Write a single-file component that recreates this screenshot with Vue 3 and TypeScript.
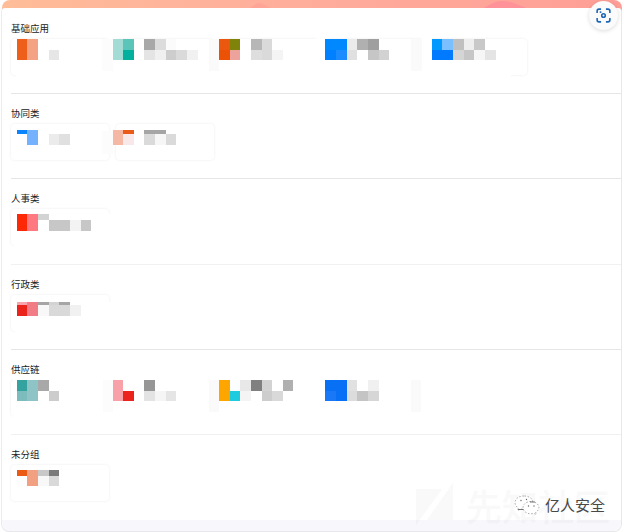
<template>
  <main class="page">
    <header class="banner">
      <svg class="banner-shapes" viewBox="0 0 620 25">
        <path d="M248 8C252 6 253 3 257 3S263 6 269 8Z" fill="#ffa598" />
        <path d="M474 10C487 8 489 1 500 1S519 7 530 10Z" fill="#ff9299" />
      </svg>
    </header>

    <div class="panel">
      <section class="group" v-for="group in groups" :key="group.title">
        <h2 class="group-title">{{ group.title }}</h2>
        <div class="card-row">
          <div class="card" v-for="n in group.cards" :key="n"></div>
        </div>
        <svg class="mosaic" viewBox="0 0 600 85" shape-rendering="crispEdges">
          <rect
            v-for="(cover, i) in group.covers"
            :key="'c' + i"
            :x="cover[0]"
            :y="cover[1]"
            :width="cover[2]"
            :height="cover[3]"
            :fill="cover[4]"
          />
          <rect
            v-for="(tile, i) in group.tiles"
            :key="i"
            :x="tileX(tile[0])"
            :y="group.rows[tile[1]]"
            :width="tileX(tile[0] + 1) - tileX(tile[0])"
            :height="group.rows[tile[1] + 1] - group.rows[tile[1]]"
            :fill="tile[2]"
          />
        </svg>
      </section>
      <footer class="panel-footer"></footer>
    </div>

    <button class="scan-btn" aria-label="scan">
      <svg viewBox="0 0 16 16" fill="none" stroke="#1f66b3" stroke-width="1.7">
        <path d="M1.200 5.400V3.200a2 2 0 0 1 2-2h2.200M10.600 1.200h2.200a2 2 0 0 1 2 2v2.200M14.800 10.600v2.200a2 2 0 0 1-2 2h-2.200M5.400 14.800H3.200a2 2 0 0 1-2-2v-2.200" />
        <circle cx="8" cy="8" r="1.900" />
        <path d="M4 4.400h1.700" />
      </svg>
    </button>

    <div class="watermark">
      <svg class="watermark-logo" viewBox="0 0 38 38">
        <path d="M0 0H26L0 36ZM37-6V31H11Z" fill="#000" />
      </svg>
      <span>先知社区</span>
    </div>

    <div class="account">
      <svg class="wechat" viewBox="0 0 26 20">
        <g fill="#fff" stroke="#999" stroke-width="0.8" stroke-dasharray="1.6 1.6">
          <path d="M10 1C4.500 1 1 4 1 7.500c0 2.300 1.300 4.200 3.400 5.400L3.500 15.500l3.400-1.500 3.100.4c5 0 9-3 9-6.900S15 1 10 1Z" />
          <path d="M17 6.500c-4.600 0-8 2.700-8 6.100s3.400 6.200 8 6.200l2.600-.4 2.800 1-.7-2.200c2-1.100 3.200-2.700 3.200-4.600 0-3.400-3.400-6.100-7.900-6.100Z" />
        </g>
        <path d="M4 14.500h5.500M16 7h5" stroke="#666" stroke-width="0.9" />
        <g fill="#666">
          <circle cx="7" cy="5.500" r="0.7" />
          <circle cx="12.500" cy="4.500" r="0.7" />
          <circle cx="14.500" cy="11" r="0.7" />
          <circle cx="20" cy="11" r="0.7" />
        </g>
      </svg>
      <span class="account-name">亿人安全</span>
    </div>
  </main>
</template>

<script setup lang="ts">
// column, row, colour
type Tile = [number, number, string];
// x, y, width, height, colour
type Cover = [number, number, number, number, string];

interface Group {
  title: string;
  cards: number;
  rows: number[];
  tiles: Tile[];
  covers: Cover[];
}

const tileX = (col: number) => Math.floor(6.3 + col * 10.64);

const groups: Group[] = [
  {
    title: '基础应用',
    cards: 5,
    rows: [31, 42, 52],
    covers: [
      [7, 31, 417, 32, '#fff'],
      [411, 28, 10, 42, '#fff'],
      [91, 31, 11, 32, '#fcfcfc'],
      [198, 31, 10, 32, '#fafafa'],
      [400, 31, 11, 32, '#fafafa'],
      [5, 63, 415, 9, '#fff'],
      [420, 65, 80, 7, '#fff'],
    ],
    tiles: [
      [0, 0, '#ed5f1a'], [1, 0, '#f4a284'],
      [0, 1, '#ed5f1a'], [1, 1, '#f4a284'], [3, 1, '#e6e6e6'],
      [9, 0, '#a3dcd4'], [10, 0, '#5bc5b9'], [12, 0, '#a8a8a8'], [13, 0, '#dcdcdc'], [14, 0, '#fbfbfb'],
      [9, 1, '#a3dcd4'], [10, 1, '#03b09d'], [12, 1, '#e4e4e4'], [13, 1, '#f0f0f0'], [14, 1, '#cdcdcd'], [15, 1, '#dadada'], [16, 1, '#f1f1f1'],
      [19, 0, '#ec5710'], [20, 0, '#80830a'], [22, 0, '#b7b7b7'], [23, 0, '#dadada'],
      [19, 1, '#ec5205'], [20, 1, '#eda29c'], [22, 1, '#dedede'], [23, 1, '#dadada'], [24, 1, '#f4f4f4'],
      [29, 0, '#0088ff'], [30, 0, '#0088ff'], [31, 0, '#ebebeb'], [32, 0, '#b0b0b0'], [33, 0, '#9f9f9f'],
      [29, 1, '#007fff'], [30, 1, '#1a8cff'], [31, 1, '#e0e0e0'], [33, 1, '#c6c6c6'], [34, 1, '#d2d2d2'],
      [39, 0, '#0099ff'], [40, 0, '#7abfff'], [41, 0, '#c0c0c0'], [42, 0, '#eeeeee'], [43, 0, '#c8c8c8'],
      [39, 1, '#007aff'], [40, 1, '#007aff'], [41, 1, '#d5d5d5'], [42, 1, '#c6c6c6'], [43, 1, '#f6f6f6'], [44, 1, '#e4e4e4'],
    ],
  },
  {
    title: '协同类',
    cards: 2,
    rows: [37, 41, 52],
    covers: [[91, 38, 11, 23, '#fcfcfc']],
    tiles: [
      [0, 0, '#0a85ff'], [1, 0, '#74b2fd'],
      [1, 1, '#74b2fd'], [3, 1, '#ebebeb'], [4, 1, '#e0e0e0'],
      [9, 0, '#f5b8a5'], [10, 0, '#ea5a18'], [12, 0, '#a5a5a5'], [13, 0, '#a5a5a5'],
      [9, 1, '#f5b8a5'], [10, 1, '#f9e8ea'], [12, 1, '#dadada'], [13, 1, '#f6f6f6'], [14, 1, '#dadada'],
    ],
  },
  {
    title: '人事类',
    cards: 1,
    rows: [35, 41, 52],
    covers: [[3, 60, 104, 11, '#fff'], [90, 35, 14, 34, '#fff']],
    tiles: [
      [0, 0, '#fd2806'], [1, 0, '#ff7a80'], [2, 0, '#d3d3d3'],
      [0, 1, '#fd2806'], [1, 1, '#ff7a80'], [3, 1, '#c7c7c7'], [4, 1, '#c7c7c7'], [5, 1, '#f3f3f3'], [6, 1, '#c7c7c7'],
    ],
  },
  {
    title: '行政类',
    cards: 1,
    rows: [38, 41, 52],
    covers: [[7, 38, 96, 29, '#fff'], [4, 65, 98, 6, '#fff']],
    tiles: [
      [0, 0, '#f5a5ab'], [1, 0, '#f17c85'], [2, 0, '#a5a5a5'], [3, 0, '#d3d3d3'], [4, 0, '#a5a5a5'],
      [0, 1, '#ea231b'], [1, 1, '#f17c85'], [2, 1, '#f8f8f8'], [3, 1, '#d9d9d9'], [4, 1, '#d9d9d9'], [5, 1, '#f1f1f1'],
    ],
  },
  {
    title: '供应链',
    cards: 4,
    rows: [31, 42, 52],
    covers: [
      [2, 28, 418, 43, '#fff'],
      [92, 31, 10, 32, '#fcfcfc'],
      [198, 31, 10, 32, '#fafafa'],
      [400, 31, 10, 32, '#fafafa'],
    ],
    tiles: [
      [0, 0, '#34a3a0'], [1, 0, '#8fc4c7'], [2, 0, '#a8a8a8'],
      [0, 1, '#7dbcbc'], [1, 1, '#8fc4c7'], [3, 1, '#cccccc'],
      [9, 0, '#f8a1a9'], [12, 0, '#969696'],
      [9, 1, '#f8a1a9'], [10, 1, '#ea241c'], [12, 1, '#e3e3e3'], [13, 1, '#f5f5f5'], [14, 1, '#e5e5e5'],
      [19, 0, '#ffa500'], [20, 0, '#fbfdff'], [21, 0, '#e8e8e8'], [22, 0, '#808080'], [23, 0, '#d3d3d3'], [25, 0, '#b0b0b0'],
      [19, 1, '#ffa500'], [20, 1, '#1fccdf'], [21, 1, '#f4f4f4'], [23, 1, '#cdcdcd'], [24, 1, '#d9d9d9'],
      [29, 0, '#0870f5'], [30, 0, '#0870f5'], [31, 0, '#e1e1e1'], [33, 0, '#f0f0f0'],
      [29, 1, '#1a78f7'], [30, 1, '#0870f5'], [31, 1, '#dcdcdc'], [32, 1, '#c4c4c4'], [33, 1, '#d6d6d6'],
    ],
  },
  {
    title: '未分组',
    cards: 1,
    rows: [36, 42, 52],
    covers: [],
    tiles: [
      [0, 0, '#ea5a14'], [1, 0, '#f2a082'], [2, 0, '#c8c8c8'], [3, 0, '#7a7a7a'],
      [0, 1, '#fdfdfd'], [1, 1, '#f2a082'], [2, 1, '#f8f8f8'], [3, 1, '#d9d9d9'],
    ],
  },
];
</script>

<style>
body {
  background: #fff;
}
</style>

<style scoped>
.page {
  position: relative;
  width: 624px;
  height: 532px;
  box-sizing: border-box;
  padding: 0 2px;
  overflow: hidden;
  font-family: "Noto Sans", "Noto Sans CJK SC", sans-serif;
}

.banner {
  height: 75px;
  margin-bottom: -67px;
  border-radius: 8px 8px 0 0;
  background: linear-gradient(90deg, #ffbd98, #ffae9c 45%, #ff9e96);
  overflow: hidden;
}

.banner-shapes {
  display: block;
  width: 620px;
  height: 25px;
}

.panel {
  position: relative;
  height: 524px;
  box-sizing: border-box;
  padding-top: 0.8px;
  border-right: 1px solid #e8e8ea;
  border-bottom: 1px solid #e8e8ea;
  border-radius: 4px 4px 8px 8px;
  background: #fff;
  box-shadow: -1px 0 0 #ececee;
  display: flex;
  flex-direction: column;
  overflow: hidden;
}

.group {
  position: relative;
  flex: 0 0 85.3px;
  box-sizing: border-box;
  margin-left: 9px;
  padding-top: 12px;
  border-bottom: 1px solid #e6e6e8;
}

.group:nth-child(3),
.group:nth-child(5) {
  border-bottom-color: #f1f1f2;
}

.group:nth-last-child(2) {
  flex-basis: 84.5px;
  border-bottom-color: transparent;
}

.group-title {
  margin: 0 0 4px;
  height: 14px;
  font-family: "Noto Sans CJK SC", sans-serif;
  font-size: 9.5px;
  font-weight: 400;
  line-height: 14px;
  color: #222;
}

.card-row {
  display: flex;
  gap: 6.5px;
}

.card {
  width: 98px;
  height: 36px;
  border-radius: 4px;
  background: #fff;
  box-shadow: 0 0 3px rgba(0, 0, 0, 0.08);
}

.mosaic {
  position: absolute;
  top: -0.8px;
  left: 0;
  width: 600px;
  height: 85px;
}

.panel-footer {
  flex: 1;
  background: #f7f7fc;
}

.scan-btn {
  position: absolute;
  top: 1px;
  left: 589px;
  width: 29px;
  height: 29px;
  display: flex;
  align-items: center;
  justify-content: center;
  padding: 0;
  border: none;
  border-radius: 50%;
  background: #fbfbfb;
  box-shadow: 0 1px 4px rgba(0, 0, 0, 0.14);
}

.scan-btn svg {
  width: 15px;
  height: 15px;
}

.watermark {
  position: absolute;
  top: 487px;
  left: 416px;
  display: flex;
  align-items: center;
  gap: 12px;
  height: 42px;
  font-size: 36px;
  font-weight: 500;
  line-height: 42px;
  white-space: nowrap;
  color: #000;
  opacity: 0.02;
}

.watermark-logo {
  width: 38px;
  height: 38px;
  overflow: visible;
}

.account {
  position: absolute;
  top: 494px;
  left: 514px;
  display: flex;
  align-items: center;
  gap: 5px;
  height: 22px;
}

.wechat {
  width: 26px;
  height: 20px;
}

.account-name {
  font-size: 15px;
  line-height: 22px;
  white-space: nowrap;
  color: #484848;
  text-shadow: 0 0 1px #fff;
}
</style>
